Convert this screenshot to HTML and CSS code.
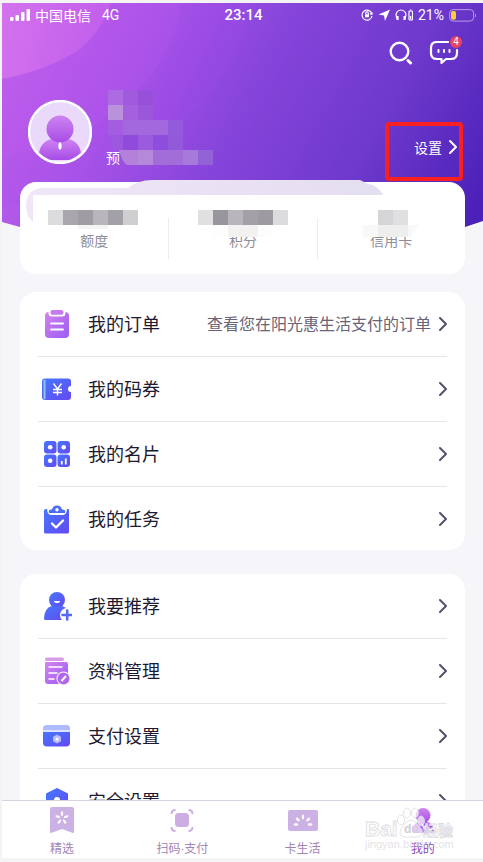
FILE: index.html
```html
<!DOCTYPE html>
<html lang="zh-CN">
<head>
<meta charset="utf-8">
<meta name="viewport" content="width=device-width, initial-scale=1">
<title>我的</title>
<link rel="stylesheet" href="styles.css">
</head>
<body>
<svg class="defs" aria-hidden="true">
  <defs>
    <linearGradient id="blue" x1="0" y1="0" x2="1" y2="1"><stop offset="0" stop-color="#4478fb"/><stop offset="1" stop-color="#6548f3"/></linearGradient>
    <linearGradient id="pink" x1="0" y1="0" x2="1" y2="1"><stop offset="0" stop-color="#d583ee"/><stop offset="1" stop-color="#9a5cf4"/></linearGradient>
    <linearGradient id="violet" x1="0" y1="0" x2="0" y2="1"><stop offset="0" stop-color="#cf83f1"/><stop offset="1" stop-color="#a64de6"/></linearGradient>
    <symbol id="chevron" viewBox="0 0 8 14"><path d="M1 1l6 6-6 6" fill="none" stroke="currentColor" stroke-width="2" stroke-linecap="round" stroke-linejoin="round"/></symbol>
  </defs>
</svg>
<div class="app">
  <main class="content">
    <svg class="backdrop" viewBox="0 0 481 225" preserveAspectRatio="none" aria-hidden="true">
      <defs>
        <linearGradient id="sky" gradientUnits="userSpaceOnUse" x1="0" y1="10" x2="455" y2="250">
          <stop offset="0" stop-color="#c765ea"/><stop offset=".25" stop-color="#ac55e8"/><stop offset=".5" stop-color="#8644db"/><stop offset=".75" stop-color="#6e39cc"/><stop offset="1" stop-color="#4b20b8"/>
        </linearGradient>
        <linearGradient id="glow" x1="0" y1="0" x2="1" y2="0"><stop offset="0" stop-color="#ff9cf0" stop-opacity=".3"/><stop offset="1" stop-color="#e070f0" stop-opacity=".3"/></linearGradient>
        <clipPath id="edge"><path d="M0 0H481V218L463 224H18L0 219z"/></clipPath>
      </defs>
      <g clip-path="url(#edge)">
        <path d="M0 0H481V225H0z" fill="url(#sky)"/>
        <path d="M0 0H248Q236 80 170 125Q90 185 0 205z" fill="#a04cf0" opacity=".16"/>
        <path d="M0 0H180Q170 60 118 105Q70 140 0 155z" fill="#c45cf0" opacity=".16"/>
        <path d="M0 0H109Q98 33 72 50Q42 68 0 76z" fill="url(#glow)"/>
      </g>
    </svg>

    <header class="hero">
      <div class="status">
        <div class="carrier">
          <svg width="20" height="13" viewBox="0 0 20 13" fill="#fff"><rect y="8" width="3.5" height="4" rx="1"/><rect x="5.5" y="6" width="3.5" height="6" rx="1"/><rect x="11" y="3" width="3.5" height="9" rx="1"/><rect x="16.500" width="3.500" height="12" rx="1"/></svg>
          <span>中国电信</span><span class="net">4G</span>
        </div>
        <time>23:14</time>
        <div class="sysicons">
          <svg width="12" height="12" viewBox="0 0 12 12" fill="none" stroke="#fff" stroke-width="1.200"><path d="M10.800 4.500A5 5 0 1 0 11 7M11.300 3.300l-.4 2-2-.5"/><rect x="4" y="5.300" width="4" height="3" fill="#fff" stroke="none"/><path d="M4.700 5.500V4.200a1.300 1.300 0 0 1 2.600 0v1.300"/></svg>
          <svg width="12" height="12" viewBox="0 0 12 12" fill="#fff"><path d="M12 .5L7 12 6 6.400.5 5.600z"/></svg>
          <svg width="18" height="12" viewBox="0 0 18 12" fill="none" stroke="#fff" stroke-width="1.200"><path d="M2.500 10.500C-1 4 3 1 6 1s7 3 3.500 9.500"/><path d="M2.600 7v4M9.500 7v4" stroke-width="2"/><rect x="14" y="2" width="3.500" height="9" rx="1"/><path d="M15 1h1.500M15.700 7v3"/></svg>
          <span>21%</span>
          <svg width="28" height="13" viewBox="0 0 28 13"><rect x=".6" y=".6" width="24" height="11.500" rx="3.500" fill="none" stroke="#b99be8"/><rect x="2" y="2" width="5" height="8.800" rx="2" fill="#fbcf3c"/><path d="M26 4.500q2 1.800 0 4z" fill="#b99be8"/></svg>
        </div>
      </div>
      <div class="actions">
        <button type="button" aria-label="搜索"><svg width="24" height="24" viewBox="0 0 24 24" fill="none" stroke="#fff" stroke-linecap="round"><circle cx="10.500" cy="10.500" r="8.800" stroke-width="2.400"/><path d="M19 19.500l2.500 2.500" stroke-width="3"/></svg></button>
        <button type="button" aria-label="消息"><svg width="30" height="24" viewBox="0 0 30 24" fill="none" stroke="#fff" stroke-width="2.200" stroke-linecap="round" stroke-linejoin="round"><path d="M19 1H8Q2 1 2 7v5q0 6 6 6h4.500v4l4.500-4h5q6 0 6-6V9"/><path d="M9.500 9v2M15 9v2M20.500 9v2" stroke-width="2"/></svg><span class="badge">4</span></button>
      </div>
      <div class="profile">
        <svg class="avatar" width="64" height="64" viewBox="0 0 64 64"><defs><clipPath id="face"><circle cx="32" cy="32" r="29.500"/></clipPath></defs><circle cx="32" cy="32" r="31" fill="#ead9fa" stroke="#fff" stroke-width="2.400"/><g clip-path="url(#face)"><path d="M10 60Q11 40 25 39h14Q53 40 54 60z" fill="url(#violet)"/><circle cx="32" cy="29" r="13.500" fill="url(#violet)"/><ellipse cx="32" cy="46" rx="1.600" ry="3.800" fill="#fff"/></g></svg>
        <div class="identity">
          <svg class="mask" width="108" height="75" viewBox="0 0 108 75" aria-hidden="true">
            <path d="M3 0h15v15H3z" fill="#ac6be3"/><path d="M18 0h15v15H18z" fill="#9f5ade"/><path d="M33 0h15v15H33z" fill="#9850db"/>
            <path d="M3 15h15v15H3z" fill="#ba92dc"/><path d="M18 15h15v15H18z" fill="#a460dd"/><path d="M33 15h15v15H33z" fill="#9b57db"/>
            <path d="M3 30h15v15H3z" fill="#a45de0"/><path d="M18 30h45v15H18z" fill="#a367de"/><path d="M63 30h15v15H63z" fill="#935adb"/>
            <path d="M3 45h15v15H9z" fill="#9b58df"/><path d="M18 45h15v15H18z" fill="#914bdc"/><path d="M33 45h15v15H33z" fill="#9c5ade"/><path d="M48 45h15v15H48z" fill="#8e4ddc"/><path d="M63 45h15v15H63z" fill="#9259da"/>
            <path d="M14 60h19v15H22q-5-3-8-15z" fill="#b381d9"/><path d="M33 60h15v15H33z" fill="#b589da"/><path d="M48 60h30v15H48z" fill="#a26dd8"/><path d="M78 60h15v15H78z" fill="#a57adb"/><path d="M93 60h15v15H93z" fill="#9163d6"/>
          </svg>
          <span>预</span>
        </div>
        <button type="button" class="settings"><span>设置</span><svg width="8" height="14"><use href="#chevron"/></svg></button>
      </div>
    </header>

    <section class="stats" aria-label="账户">
      <div class="stat"><span>额度</span></div>
      <div class="stat"><span>积分</span></div>
      <div class="stat"><span>信用卡</span></div>
      <svg class="veil" viewBox="0 0 445 94" aria-hidden="true">
        <defs><linearGradient id="haze" x1="0" y1="0" x2="1" y2="0"><stop offset="0" stop-color="#f0e6f7"/><stop offset="1" stop-color="#e4def1"/></linearGradient></defs>
        <path d="M6 28Q7 10 23 10H108Q118 2 132 2H340l8 4q10 1 15 11H13V44Q6 38 6 28z" fill="url(#haze)"/>
        <path d="M28 32h15v15H28z" fill="#dcdcde"/><path d="M43 32h15v15H43z" fill="#a9a7ad"/><path d="M58 32h15v15H58z" fill="#9f9da3"/><path d="M73 32h15v15H73z" fill="#b8b6bc"/><path d="M88 32h15v15H88z" fill="#a3a1a7"/><path d="M103 32h15v15h-15z" fill="#cfced1"/><path d="M58 47h30v4H58z" fill="#f4f4f5"/>
        <path d="M178 32h15v15h-15z" fill="#e0e0e1"/><path d="M193 32h15v15h-15z" fill="#98969c"/><path d="M208 32h15v15h-15z" fill="#b8b6bc"/><path d="M223 32h15v15h-15z" fill="#a3a1a7"/><path d="M238 32h15v15h-15z" fill="#9d9aa1"/><path d="M253 32h15v15h-15z" fill="#dcdcde"/><path d="M193 47h60v12h-60z" fill="#fdfdfd"/><path d="M208 47h30v12h-30z" fill="#f4f1f1"/>
        <path d="M358 32h15v15h-15z" fill="#d5d5d8"/><path d="M373 32h15v15h-15z" fill="#e0e0e2"/><path d="M343 47h56l-9 12h-47z" fill="#f8f8f8"/><path d="M358 47h30v12h-30z" fill="#eeeeef"/>
      </svg>
    </section>

    <nav class="menu" aria-label="我的服务">
      <a href="#orders"><svg class="icon" viewBox="0 0 30 30"><rect x="3" y="3" width="24" height="26" rx="4" fill="url(#pink)"/><rect x="6.500" y="-.5" width="17" height="8" rx="3.500" fill="#fff"/><rect x="8.500" y="1" width="13" height="4.800" rx="2" fill="#c67aed"/><path d="M9 14.500h12M9 20.500h12" stroke="#fff" stroke-width="1.800" stroke-linecap="round"/></svg><span>我的订单</span><span class="hint">查看您在阳光惠生活支付的订单</span><svg class="go"><use href="#chevron"/></svg></a>
      <a href="#coupons"><svg class="icon" viewBox="0 0 30 30"><path d="M3 4.500h23q3 0 3 3v4.500a3 3 0 0 0 0 6v5q0 3-3 3H3q-3 0-3-3v-15.500q0-3 3-3z" fill="url(#blue)"/><path d="M1.500 6q0 0 2-.5v20q-2-.5-2-1z" fill="#8fc0ff"/><path d="M11.500 9.500l4 5.500 4-5.500M15.500 15v6.500M11 15.500h9M11 18.500h9" fill="none" stroke="#fff" stroke-width="1.400"/></svg><span>我的码券</span><svg class="go"><use href="#chevron"/></svg></a>
      <a href="#card"><svg class="icon" viewBox="0 0 30 30" fill="url(#blue)"><rect x="2" y="2" width="12.500" height="12.500" rx="3"/><rect x="15.500" y="2" width="12.500" height="12.500" rx="3"/><rect x="2" y="15.500" width="12.500" height="12.500" rx="3"/><rect x="15.500" y="15.500" width="12.500" height="12.500" rx="3"/><g fill="#fff"><circle cx="8.200" cy="8.200" r="2.300"/><circle cx="21.700" cy="8.200" r="2.300"/><circle cx="8.200" cy="21.700" r="2.300"/></g><path d="M19.800 22v3.500M23.800 19.500v6" stroke="#fff" stroke-width="1.800"/></svg><span>我的名片</span><svg class="go"><use href="#chevron"/></svg></a>
      <a href="#tasks"><svg class="icon" viewBox="0 0 30 30"><path d="M4 5h22q1 0 1 1v22q0 1.500-1.500 1.500h-22Q2 29.500 2 28V6.500Q2 5 4 5z" fill="url(#blue)"/><path d="M5 4h20q0 7-4 7H9Q5 11 5 4z" fill="#fff"/><path d="M7 9Q6 5 10 5.500q1-4 5-4t5 4q4-.5 3 3.500z" fill="#4c6df8"/><circle cx="15" cy="5.800" r="1.700" fill="#fff"/><path d="M10 19.500l4 4 7-7" fill="none" stroke="#fff" stroke-width="2.400" stroke-linecap="round" stroke-linejoin="round"/></svg><span>我的任务</span><svg class="go"><use href="#chevron"/></svg></a>
    </nav>

    <nav class="menu" aria-label="账户管理">
      <a href="#invite"><svg class="icon" viewBox="0 0 30 30"><circle cx="15" cy="9" r="8" fill="url(#blue)"/><path d="M2 28Q2 17 10 15h10q6 2 6 7v6Q26 29 24 29H4Q2 29 2 28z" fill="url(#blue)"/><path d="M12 10.500q3 2.500 6 0z" fill="#fff" stroke="#fff" stroke-linejoin="round"/><circle cx="25" cy="24" r="7" fill="#fff"/><path d="M25.200 19.500v9M20.500 24h9" stroke="#5869f4" stroke-width="2.600" stroke-linecap="round"/></svg><span>我要推荐</span><svg class="go"><use href="#chevron"/></svg></a>
      <a href="#profile"><svg class="icon" viewBox="0 0 30 30"><rect x="3" y="1.500" width="19" height="3.500" rx="1.700" fill="#d79bea"/><path d="M4 6h20q2 0 2 2v18q0 2-2 2H6q-3 0-3-3V7q0-1 1-1z" fill="url(#pink)"/><path d="M7 11h13M7 17h8M7 23h5" stroke="#fff" stroke-width="1.500" stroke-linecap="round"/><circle cx="21.500" cy="22.500" r="7" fill="#fff"/><circle cx="21.500" cy="22.500" r="6" fill="#b067ec"/><path d="M19.500 25l4.500-5" stroke="#fff" stroke-width="2"/></svg><span>资料管理</span><svg class="go"><use href="#chevron"/></svg></a>
      <a href="#payment"><svg class="icon" viewBox="0 0 30 30"><path d="M1 9V7.500q0-3.500 3.500-3.500h20Q28 4 28 7.500V9z" fill="#aebcff"/><path d="M1 9h27v2H1z" fill="#dbe3ff"/><path d="M1 11h27v10.500q0 4-4 4H5q-4 0-4-4z" fill="url(#blue)"/><path d="M15 13.500l4 2.200v4.500l-4 2.300-4-2.300v-4.500z" fill="#b9bbff"/><circle cx="15" cy="18" r="1.500" fill="#fff"/></svg><span>支付设置</span><svg class="go"><use href="#chevron"/></svg></a>
      <a href="#security"><svg class="icon" viewBox="0 0 30 30"><path d="M15 2l11 5.500V18q0 7-11 11Q4 25 4 18V7.500z" fill="url(#blue)"/><circle cx="15" cy="14" r="3" fill="#fff"/></svg><span>安全设置</span><svg class="go"><use href="#chevron"/></svg></a>
    </nav>
  </main>

  <nav class="tabs" aria-label="主导航">
    <a href="#featured"><svg viewBox="0 0 30 26"><path d="M5 0h20q2 0 2 2v23q0 1-1 1l-11-4-11 4q-1 0-1-1V2q0-2 2-2z" fill="#ccb1e4"/><g fill="#fff"><ellipse cx="15" cy="6.500" rx="1.200" ry="2.500"/><ellipse cx="15" cy="6.500" rx="1.200" ry="2.500" transform="rotate(72 15 11)"/><ellipse cx="15" cy="6.500" rx="1.200" ry="2.500" transform="rotate(144 15 11)"/><ellipse cx="15" cy="6.500" rx="1.200" ry="2.500" transform="rotate(216 15 11)"/><ellipse cx="15" cy="6.500" rx="1.200" ry="2.500" transform="rotate(288 15 11)"/></g></svg><span>精选</span></a>
    <a href="#scan"><svg viewBox="0 0 30 26"><rect x="8" y="6" width="14" height="14" rx="3.500" fill="#ccaee5"/><path d="M4.500 7q0-4 4-4M21.500 3q4 0 4 4M4.500 20q0 4 4 4M21.500 24q4 0 4-4" fill="none" stroke="#ccaee5" stroke-width="2"/></svg><span>扫码·支付</span></a>
    <a href="#life"><svg viewBox="0 0 30 26"><rect y="3" width="30" height="21" rx="2" fill="#ccb1e4"/><g fill="#fff"><ellipse cx="15" cy="10" rx="1.200" ry="2.400"/><ellipse cx="9.800" cy="12.500" rx="1.200" ry="2.400" transform="rotate(-50 9.800 12.500)"/><ellipse cx="20.200" cy="12.500" rx="1.200" ry="2.400" transform="rotate(50 20.200 12.500)"/><ellipse cx="8" cy="17.500" rx="2.400" ry="1.200"/><ellipse cx="22" cy="17.500" rx="2.400" ry="1.200"/></g></svg><span>卡生活</span></a>
    <a href="#me" class="active" aria-current="page"><svg viewBox="0 0 30 26"><circle cx="15" cy="8.500" r="7.500" fill="url(#violet)"/><path d="M5 26V21q0-5 7-6h7q7 1 7 11z" fill="#a552ec"/><path d="M14 17l2 4 3-3M20 23l6-1" stroke="#fff" stroke-width="1.500" fill="none"/></svg><span>我的</span></a>
    <svg class="mark" width="94" height="46" viewBox="0 0 94 46" aria-hidden="true">
      <g fill="#fff" fill-opacity=".7" stroke="#dcdce0" stroke-width=".8">
        <text x="2" y="29" class="brand">Bai</text>
        <ellipse cx="38" cy="13" rx="3.500" ry="5"/><ellipse cx="44" cy="6" rx="3.500" ry="5"/><ellipse cx="52" cy="6" rx="3.500" ry="5"/><ellipse cx="58" cy="14" rx="3.500" ry="5"/>
        <path d="M48 13q4 0 7 5 6 5 4 9-2 4-11 3-10 1-11-3-1-4 4-9 3-5 7-5z"/>
        <text x="60" y="29" class="exp">经验</text>
      </g>
      <text x="41" y="26" class="du">du</text>
      <text x="2" y="41" class="site">jingyan.baidu.com</text>
    </svg>
  </nav>
</div>
</body>
</html>
```
FILE: styles.css
```css
* { box-sizing: border-box; }

body {
  margin: 0;
  background: #f4f4f4;
  font-family: "Liberation Sans", "Noto Sans CJK SC", sans-serif;
  color: #1d1930;
}

a { color: inherit; text-decoration: none; }
button { position: relative; padding: 0; border: 0; background: none; color: inherit; font: inherit; cursor: pointer; }
svg { display: block; flex: none; }
.defs { position: absolute; width: 0; height: 0; }

.app {
  display: flex;
  flex-direction: column;
  height: 100vh;
  padding: 3px 0 4px 2px;
}

.content {
  position: relative;
  flex: 1;
  min-height: 0;
  overflow: hidden;
  padding: 0 18px;
  background: #f5f5fa;
}

.backdrop { position: absolute; top: 0; left: 0; width: 100%; height: 225px; }

.hero { position: relative; height: 179px; color: #fff; }

.status {
  display: grid;
  grid-template-columns: 1fr auto 1fr;
  align-items: center;
  height: 24px;
  margin: 0 -12px 0 -10px;
  font-family: Roboto, "Noto Sans CJK SC", sans-serif;
  font-size: 14px;
}
.carrier { display: flex; align-items: center; gap: 5px; }
.net { margin-left: 6px; }
.status time { font-size: 15px; font-weight: 500; }
.sysicons { display: flex; align-items: center; justify-content: flex-end; gap: 5px; }

.actions { display: flex; justify-content: flex-end; gap: 16px; margin: 14px 6px 0 0; }
.badge {
  position: absolute;
  top: -5px;
  right: -3px;
  width: 12px;
  height: 12px;
  border-radius: 6px;
  background: #e44567;
  font-size: 10px;
  line-height: 12px;
}

.profile { display: flex; align-items: center; height: 64px; margin: 35px 8px 0; }
.identity { position: relative; margin-left: 14px; padding-top: 52px; font-size: 14px; line-height: 20px; }
.mask { position: absolute; left: -1px; bottom: 3px; }
.settings { display: flex; align-items: center; gap: 7px; height: 20px; margin: 30px 0 0 auto; font-size: 14px; }
.settings::after {
  content: "";
  position: absolute;
  inset: -15px -6px -24px -29px;
  border: 4px solid #fb2020;
  border-radius: 4px;
}

.stats {
  position: relative;
  display: grid;
  grid-template-columns: repeat(3, 1fr);
  height: 92px;
  border-radius: 16px;
  background: #fff;
  color: #8f8d98;
  font-size: 14px;
  line-height: 20px;
  text-align: center;
}
.stat { margin: 36px 0 15px; padding-top: 13px; }
.stat + .stat { border-left: 1px solid #ececef; }
.veil { position: absolute; top: -4px; left: 0; width: 100%; height: 94px; }

.menu {
  position: relative;
  margin-top: 18px;
  padding: 0 18px;
  border-radius: 16px;
  background: #fff;
}
.menu + .menu { margin-top: 24px; }
.menu a {
  display: flex;
  align-items: center;
  height: 65px;
  border-bottom: 1px solid #e6e6ea;
  font-size: 18px;
}
.menu a:last-child { height: 63px; border-bottom: 0; }
.menu span { padding-bottom: 2px; }
.icon { width: 30px; height: 30px; margin: 0 16px 0 4px; }
.hint { margin-left: auto; margin-right: 8px; color: #696376; font-size: 16px; }
.go { width: 8px; height: 14px; margin-left: auto; color: #57516c; }
.hint + .go { margin-left: 0; }

.tabs {
  position: relative;
  display: grid;
  grid-template-columns: repeat(4, 1fr);
  height: 58px;
  border-top: 1px solid #d5d4df;
  background: #fff;
  color: #a284b6;
  font-size: 12px;
  line-height: 16px;
}
.tabs a { display: flex; flex-direction: column; align-items: center; gap: 8px; padding-top: 6px; }
.tabs a svg { width: 30px; height: 26px; }
.tabs .active { color: #853fb8; }
.mark { position: absolute; right: 26px; top: 6px; pointer-events: none; }
.brand { font-size: 21px; font-weight: 700; }
.exp { font-size: 15px; font-weight: 700; }
.site { font-size: 11px; fill: #dcdae2; fill-opacity: .8; }
.du { font-size: 12px; font-weight: 700; fill: #d2cdda; }
```
